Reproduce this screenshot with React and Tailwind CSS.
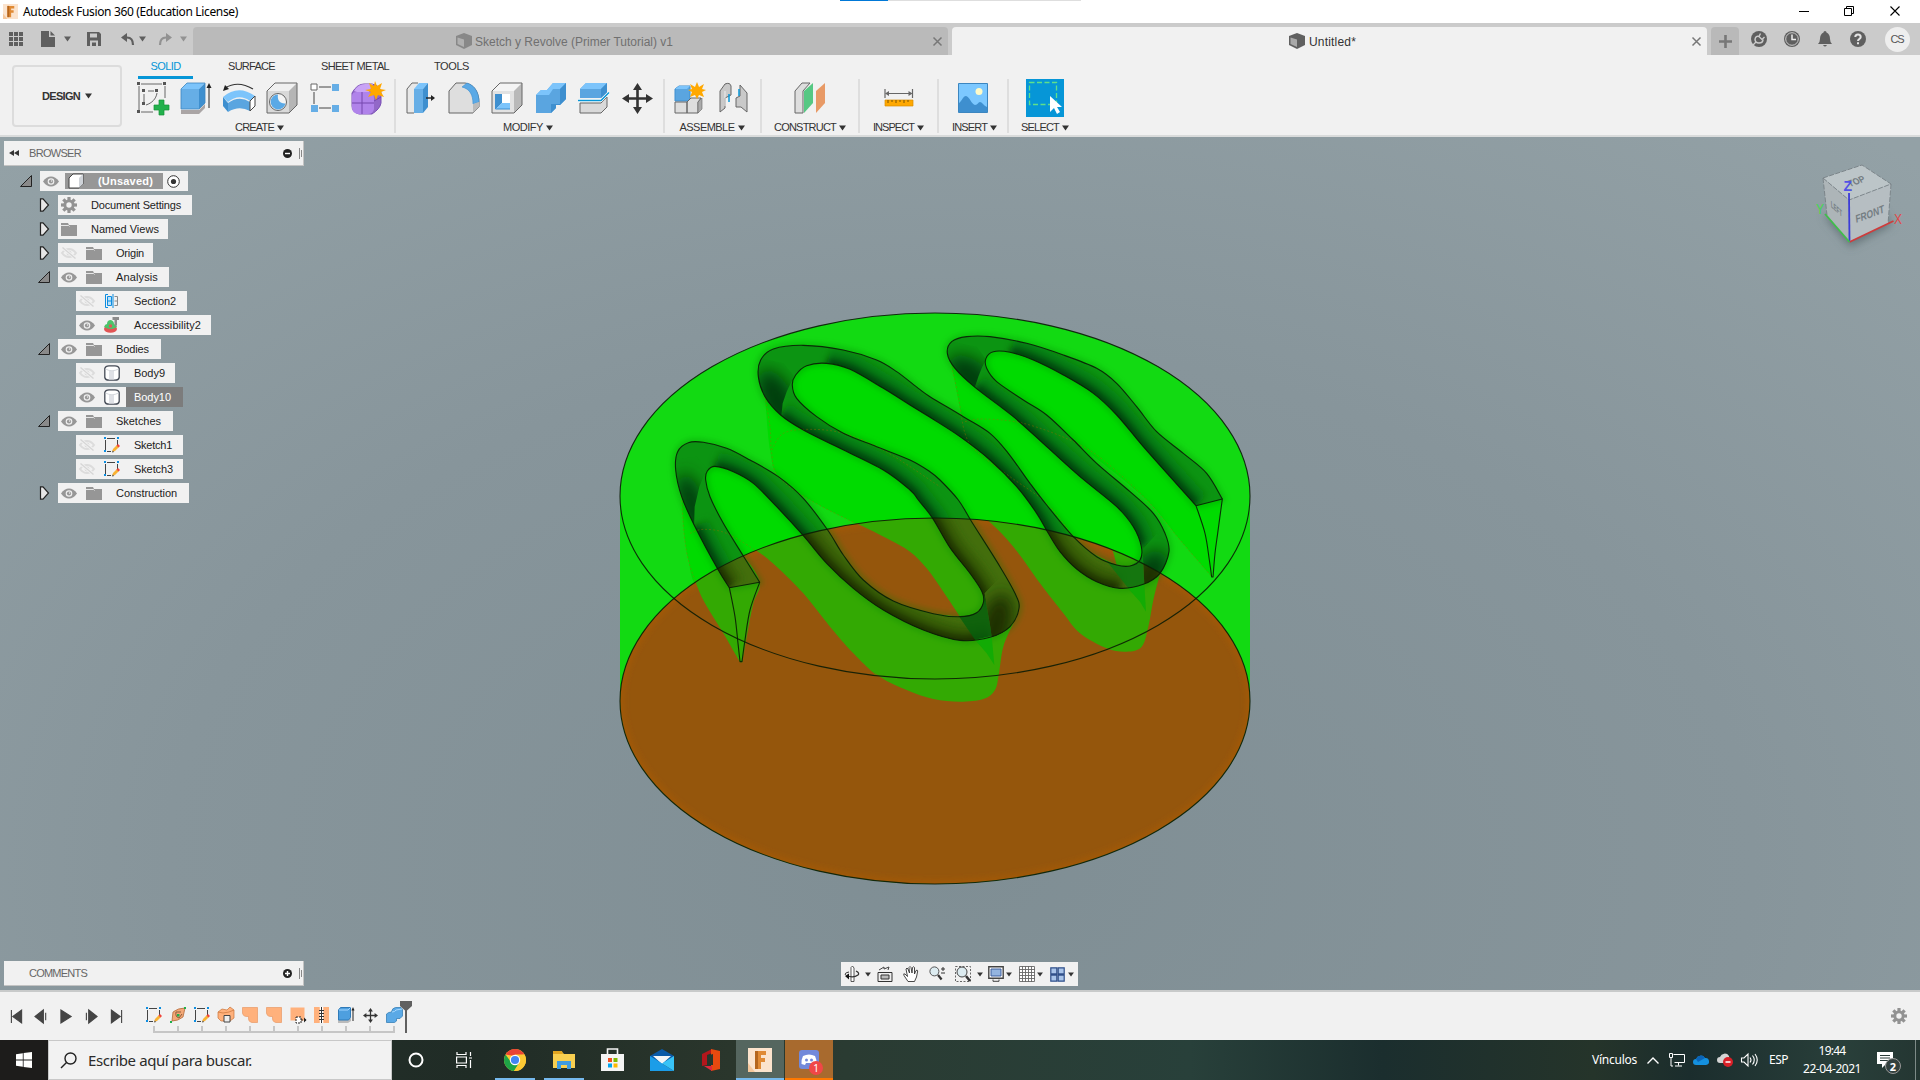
import React, { useLayoutEffect, useRef, useState } from 'react';

const UI = "font-['Liberation_Sans',sans-serif]";
const SEGOE = "font-['Noto_Sans',sans-serif]";

/* Single-line text whose tracking is adjusted to fill a given width. */
function T({ w, className = '', children }) {
  const ref = useRef(null);
  const [ls, setLs] = useState(0);
  useLayoutEffect(() => {
    const natural = ref.current.getBoundingClientRect().width;
    setLs((w - natural) / String(children).length);
  }, []);
  return (
    <span ref={ref} className={`inline-block shrink-0 whitespace-pre ${className}`} style={{ letterSpacing: ls }}>
      {children}
    </span>
  );
}

function Cell({ w, children, className = '' }) {
  return <div className={`flex h-full shrink-0 items-center justify-center ${className}`} style={{ width: w }}>{children}</div>;
}

const Caret = ({ c = '#333', s = 7 }) => (
  <svg width={s} height={s - 1} viewBox="0 0 7 6" className="shrink-0"><path d="M0 .5h7L3.5 5.5z" fill={c} /></svg>
);

const Svg = ({ s = 16, h, vb, children }) => (
  <svg width={s} height={h || s} viewBox={vb || `0 0 ${s} ${h || s}`} className="shrink-0 overflow-visible" fill="none">{children}</svg>
);

/* ---------- ribbon icons ---------- */
const line = '#666';
const R = {
  sketch: (
    <Svg s={32}>
      <path d="M2 4v24M4 2h21M28 4v12M4 30h12" stroke={line} />
      <path d="M7 12v9M11 9h6M9 23C15 21 19 17 20 11" stroke={line} />
      <path d="M0 0h3v3H0zM26 0h3v3h-3zM0 28h3v3H0zM5 7h3v3H5zM18 7h3v3h-3zM5 20h3v3H5z" fill="#555" />
      <path d="M22 18h5v5h5v5h-5v5h-5v-5h-5v-5h5z" fill="#22b14c" stroke="#159238" strokeWidth=".7" />
    </Svg>
  ),
  extrude: (
    <Svg s={32}>
      <path d="M1 28h18l6-6v4l-6 6H1z" fill="#aaa5a5" />
      <path d="M1 7h18v20H1z" fill="#66aee6" /><path d="M1 7l6-6h18l-6 6z" fill="#7cc4fb" /><path d="M19 7l6-6v20l-6 6z" fill="#3e8fcf" />
      <path d="M1 7l6-6h18v20l-6 6H1z" stroke="#3c86c0" strokeWidth=".8" />
      <path d="M29 26V4" stroke="#222" /><path d="M26.500 6L29 1l2.500 5z" fill="#222" />
    </Svg>
  ),
  revolve: (
    <Svg s={34} h={32}>
      <path d="M3 6Q16-2 31 7" stroke="#333" strokeWidth="1.200" /><path d="M1 9l2-6 4 4z" fill="#222" />
      <path d="M1 15Q16 2 33 14l-5 5Q17 11 6 20z" fill="#7cc4fb" />
      <path d="M1 15l5 6v9l-5-6z" fill="#3e8fcf" /><path d="M6 21q11-8 22-1v9q-11-6-22 1z" fill="#5aa5e0" />
      <path d="M28 19l5-5v10l-5 5z" fill="#fff" stroke="#444" />
    </Svg>
  ),
  hole: (
    <Svg s={32}>
      <path d="M1 9h22v22H1z" fill="#d9d9d9" /><path d="M1 9l8-8h22l-8 8z" fill="#f0f0f0" /><path d="M23 9l8-8v22l-8 8z" fill="#b5b5b5" />
      <path d="M1 9l8-8h22v22l-8 8H1z" stroke={line} /><circle cx="12" cy="20" r="8.500" fill="#f4f4f4" stroke={line} />
      <path d="M12 12.500a7.500 7.500 0 1 0 7.500 9C14 22 11 18 12 12.500z" fill="#5aa9e6" />
    </Svg>
  ),
  pattern: (
    <Svg s={30} h={30}>
      <path d="M9 4h12M4 9v12M9 25h12" stroke="#444" />
      <path d="M1 1h6v6H1z" fill="#fff" stroke={line} /><path d="M22 1h7v7h-7zM1 22h7v7H1zM22 22h7v7h-7z" fill="#66aee6" />
    </Svg>
  ),
  form: (
    <Svg s={34} h={33}>
      <path d="M2 11Q7 2 14 2h8q9 2 9 9v10q-1 6-9 11H9q-7-2-7-8z" fill="#9268c8" stroke="#7a4fb5" />
      <path d="M2 14q0-4 5-4h12q5 1 5 6v11q-1 5-6 5H8q-6-1-6-6z" fill="#b083ea" />
      <path d="M4 9q4-7 11-7h8l-4 8H7z" fill="#c9a3f6" />
      <path d="M2 21h22M12 10v22M24 19l7-4" stroke="#7547ad" />
      <path d="M25-1l2 5 5-3-2 6 6 1-5 2 3 5-6-2-2 5-2-5-6 2 3-5-6-2 6-1-2-6 5 3z" fill="#ffa800" />
    </Svg>
  ),
  press: (
    <Svg s={30} h={32}>
      <path d="M8 31H1V7l5-6h6" fill="#e8e8e8" stroke={line} /><path d="M8 7h9v24H8z" fill="#66aee6" />
      <path d="M8 7l5-6h9l-5 6z" fill="#7cc4fb" /><path d="M17 7l5-6v24l-5 6z" fill="#3e8fcf" />
      <path d="M20 16h6" stroke="#222" strokeWidth="1.400" /><path d="M25 13l4 3-4 3z" fill="#222" />
    </Svg>
  ),
  fillet: (
    <Svg s={32}>
      <path d="M1 31V9l7-8h9c9 1 14 9 14 20v4l-6 6z" fill="#dedede" stroke={line} />
      <path d="M14 5l5-4c9 3 12 11 12 19l-6 2C25 13 22 7 14 5z" fill="#5aa9e6" stroke="#3e8fcf" strokeWidth=".6" />
      <path d="M25 22l6-2v5l-6 6z" fill="#bbb" />
    </Svg>
  ),
  shell: (
    <Svg s={32}>
      <path d="M1 9h22v22H1z" fill="#e2e2e2" /><path d="M1 9l8-8h22l-8 8z" fill="#f4f4f4" /><path d="M23 9l8-8v22l-8 8z" fill="#b9b9b9" />
      <path d="M1 9l8-8h22v22l-8 8H1z" stroke={line} /><path d="M5 12h14v15H5z" fill="#fff" />
      <path d="M5 12h6v9l-6 6z" fill="#3e8fcf" /><path d="M5 27l6-6h8v6z" fill="#7cc4fb" /><path d="M4.500 12v15H19" stroke="#3e8fcf" />
    </Svg>
  ),
  combine: (
    <Svg s={32}>
      <path d="M1 13l5-5h6l6-7h13v16l-6 6h-4v3l-5 5H1z" fill="#5aa5e0" />
      <path d="M12 8l6-7h13l-6 6h-7l-4 6H1l5-5z" fill="#7cc4fb" /><path d="M25 7l6-6v16l-6 6h-4v3l-5 5v-9h9z" fill="#3e8fcf" />
    </Svg>
  ),
  split: (
    <Svg s={32}>
      <path d="M2 7l6-6h21v10l-6 5H2z" fill="#5aa5e0" /><path d="M2 7l6-6h21l-6 6z" fill="#7cc4fb" /><path d="M23 7l6-6v10l-6 5z" fill="#3e8fcf" />
      <path d="M2 21h21l6-6v10l-6 6H2z" fill="#d9d9d9" stroke={line} /><path d="M0 18.500h23l8-8" stroke="#fff" strokeWidth="3" /><path d="M0 18.500h23l8-8" stroke="#0696d7" strokeWidth="1.500" />
    </Svg>
  ),
  move: (
    <Svg s={31} vb="0 0 31 31">
      <path d="M15.500 4v23M4 15.500h23" stroke="#333" strokeWidth="2.600" />
      <path d="M15.500 0l4.500 7h-9zM15.500 31l-4.500-7h9zM0 15.500L7 11v9zM31 15.500L24 20v-9z" fill="#333" />
    </Svg>
  ),
  component: (
    <Svg s={32}>
      <path d="M1 7l4-3h11v15H1z" fill="#5aa5e0" stroke="#3e8fcf" /><path d="M1 7l4-3h11l-3 3z" fill="#7cc4fb" />
      <path d="M1 20h12v11H1zM13 20l4-4h10l-3 4v11H13z" fill="#dedede" stroke={line} /><path d="M24 20l4-4v11l-4 4z" fill="#aaa" stroke={line} strokeWidth=".6" />
      <path d="M23 0l2 5 5-3-2 5 4 1-4 2 2 5-5-2-2 4-2-4-5 2 2-5-4-2 4-1-2-5 5 3z" fill="#ffa800" />
    </Svg>
  ),
  joint: (
    <Svg s={30} h={30}>
      <path d="M1 29V8l5-7q5-2 6 2v9l-6 3v10z" fill="#c9c9c9" stroke={line} /><path d="M10 11v8" stroke="#0696d7" strokeWidth="1.500" />
      <path d="M28 29V10l-7-8v11l-4 2v9h5z" fill="#c9c9c9" stroke={line} /><path d="M20 6v7" stroke="#0696d7" strokeWidth="1.500" /><path d="M6 8v15" stroke="#eee" />
    </Svg>
  ),
  plane: (
    <Svg s={32}>
      <path d="M1 31V9l7-8h8l-7 8v22z" fill="#dedede" stroke={line} /><path d="M10 9l9-8v20l-9 10z" fill="#56c883" /><path d="M22 9l9-8v20l-9 10z" fill="#e89a66" />
    </Svg>
  ),
  measure: (
    <Svg s={30} h={20}>
      <path d="M1 1v9M28.500 1v9M3 5.500h24" stroke={line} strokeWidth="1.200" /><path d="M1 5.500L5 3v5zM28.500 5.500L24.500 3v5z" fill={line} />
      <path d="M1 12h28v6H1z" fill="#ffa800" stroke="#d98c00" strokeWidth=".7" /><path d="M4 12v3M8 12v2M12 12v3M16 12v2M20 12v3M24 12v2" stroke="#7a5200" />
    </Svg>
  ),
  image: (
    <Svg s={30} h={30}>
      <path d="M.5.5h29v29H.5z" fill="#7cc8ff" stroke="#3c86c0" /><circle cx="21" cy="8.500" r="3.500" fill="#fffbc8" />
      <path d="M1 20c3-2 4-7 7-7s6 9 9 9 3-3 5-3 3 3 7 5v5H1z" fill="#3e8fcf" />
    </Svg>
  ),
  select: (
    <div className="flex h-[38px] w-[38px] items-center justify-center bg-[#0696d7]">
      <Svg s={32} h={34}><path d="M.5 1.500h27v22H.5z" stroke="#5fe08a" strokeWidth="1.300" strokeDasharray="5 2.500" /><path d="M21 15v16l4-4 3 6 3-2-3-5h5z" fill="#fff" /></Svg>
    </div>
  ),
};

/* w: group width, c: icon cell width, pl / lp: left inset of icons and label */
const GROUPS = [
  { n: 'CREATE', tw: 39, w: 264, c: 42.8, pl: 0, lp: 103, icons: ['sketch', 'extrude', 'revolve', 'hole', 'pattern', 'form'] },
  { n: 'MODIFY', tw: 40, w: 269, c: 43.2, pl: 3.5, lp: 107, icons: ['press', 'fillet', 'shell', 'combine', 'split', 'move'] },
  { n: 'ASSEMBLE', tw: 55, w: 97, c: 43.5, pl: 3.5, lp: 14.5, icons: ['component', 'joint'] },
  { n: 'CONSTRUCT', tw: 62, w: 98, c: 43, pl: 26.5, lp: 12, icons: ['plane'] },
  { n: 'INSPECT', tw: 41, w: 79, c: 43, pl: 17.5, lp: 13, icons: ['measure'] },
  { n: 'INSERT', tw: 35, w: 70, c: 43, pl: 12.5, lp: 13, icons: ['image'] },
  { n: 'SELECT', tw: 38, w: 74, c: 43, pl: 14.5, lp: 12, icons: ['select'] },
];

function Ribbon() {
  return (
    <div className={`flex h-[82px] border-b-2 border-[#d9dbdb] bg-[#f1f1f1] text-[#333] ${UI}`}>
      <div className="mt-[10px] ml-[12px] flex h-[62px] w-[110px] shrink-0 items-center justify-center gap-[5px] rounded-[4px] border-2 border-[#dcdcdc] text-[11px] font-bold">
        <T w={38}>DESIGN</T><Caret />
      </div>
      <div className="ml-[10px] flex flex-col">
        <div className="flex h-[24px] text-[11px]">
          <div className="ml-[6px] flex w-[55px] items-center justify-center border-b-[3px] border-[#0696d7] pt-[2px] text-[#0696d7]"><T w={30}>SOLID</T></div>
          <div className="ml-[35px] flex items-center pb-[1px]"><T w={47}>SURFACE</T></div>
          <div className="ml-[46px] flex items-center pb-[1px]"><T w={68}>SHEET METAL</T></div>
          <div className="ml-[45px] flex items-center pb-[1px]"><T w={35}>TOOLS</T></div>
        </div>
        <div className="flex">
          {GROUPS.map((g, i) => (
            <div key={g.n} className={`flex h-[54px] shrink-0 flex-col ${i < 6 ? 'border-r-2 border-[#dedede]' : ''}`} style={{ width: g.w }}>
              <div className="flex h-[38px] shrink-0" style={{ paddingLeft: g.pl }}>
                {g.icons.map((k) => <Cell key={k} w={g.c}>{R[k]}</Cell>)}
              </div>
              <div className="mt-[4px] flex h-[13px] shrink-0 items-center gap-[3px] text-[11px]" style={{ paddingLeft: g.lp }}>
                <T w={g.tw}>{g.n}</T><Caret />
              </div>
            </div>
          ))}
        </div>
      </div>
    </div>
  );
}

/* ---------- title bar and document tabs ---------- */
const FLogo = ({ s }) => (
  <Svg s={s} vb="0 0 24 24"><path d="M0 0h24v24H0z" fill="#fbe3cd" /><path d="M7 3h11v4h-5v3h4v4h-4v7H7z" fill="#e08a35" /><path d="M7 3h3v18H7z" fill="#b5651d" /><path d="M0 15l7 9H0z" fill="#f5c79c" /></Svg>
);
const CubeIcon = ({ a, b }) => (
  <Svg s={16} h={16}><path d="M0 3l8-3 8 3v9l-8 4-8-4z" fill={a} /><path d="M1.500 4.500L8 6.500v7.500l-6.500-3z" fill={b} /></Svg>
);
const X = ({ s = 9, c = '#777', w = 1.5 }) => <Svg s={s}><path d={`M.5.5L${s - .5} ${s - .5}M${s - .5}.5L.5 ${s - .5}`} stroke={c} strokeWidth={w} /></Svg>;

function TitleBar() {
  return (
    <div className="flex h-[23px] justify-between bg-white">
      <div className={`flex w-[840px] items-center pl-[3px] text-[12px] text-black ${SEGOE}`}>
        <FLogo s={15} /><span className="w-[5px]" /><T w={215}>Autodesk Fusion 360 (Education License)</T>
      </div>
      <div className="flex h-[1px] w-[241px]"><div className="w-[48px] bg-[#0078d7]" /><div className="flex-1 bg-[#dedede]" /></div>
      <div className="ml-auto flex h-[21px] items-center pr-[1px]">
        <Cell w={46}><Svg s={10}><path d="M0 5.500h10" stroke="#000" /></Svg></Cell>
        <Cell w={44}><Svg s={10}><path d="M.5 2.500h7v7h-7zM2.500 2.500v-2h7v7h-2" stroke="#000" /></Svg></Cell>
        <Cell w={48}><X s={10} c="#000" w={1.1} /></Cell>
      </div>
    </div>
  );
}

function TabBar() {
  return (
    <div className={`flex h-[32px] bg-[#cbcbcb] text-[12px] ${UI}`}>
      <div className="flex w-[193px] shrink-0 items-center">
        <Cell w={32}><Svg s={14}>{[0, 5, 10].map((y) => [0, 5, 10].map((x) => <rect key={`${x}-${y}`} x={x} y={y} width="4" height="4" fill="#5f5f5f" />))}</Svg></Cell>
        <Cell w={32}><Svg s={14} h={16}><path d="M0 0h8v6h6v10H0z" fill="#5f5f5f" /><path d="M9.500 0L14 4.500H9.500z" fill="#5f5f5f" /></Svg></Cell>
        <Caret c="#5f5f5f" />
        <Cell w={46}><Svg s={14}><path d="M0 0h12l2 2v12H0z" fill="#5f5f5f" /><path d="M3 1.500h7v4H3zM3 8.500h8V14H3z" fill="#cbcbcb" /><path d="M5 10.500h4V14H5z" fill="#5f5f5f" /></Svg></Cell>
        <Cell w={22}><Svg s={14} h={13}><path d="M2 4.500h4q6 0 6 7.500" stroke="#5f5f5f" strokeWidth="2.200" /><path d="M6 0v9L0 4.500z" fill="#5f5f5f" /></Svg></Cell>
        <Caret c="#5f5f5f" />
        <Cell w={38}><Svg s={14} h={13}><path d="M12 4.500H8q-6 0-6 7.500" stroke="#929292" strokeWidth="2.200" /><path d="M8 0v9l6-4.500z" fill="#929292" /></Svg></Cell>
        <div className="-ml-[4px] flex"><Caret c="#929292" /></div>
      </div>
      <div className="mt-[4px] flex w-[755px] shrink-0 items-center rounded-t-[4px] bg-[#bababa] pr-[6px] text-[#707070]">
        <div className="ml-[263px] flex flex-1 items-center gap-[3px]"><CubeIcon a="#888" b="#b0b0b0" /><T w={198} className="pt-[1px]">Sketch y Revolve (Primer Tutorial) v1</T></div>
        <X c="#777" />
      </div>
      <div className="mt-[4px] ml-[4px] flex w-[755px] shrink-0 items-center rounded-t-[4px] bg-[#f1f1f1] pr-[6px] text-[#333]">
        <div className="ml-[337px] flex flex-1 items-center gap-[4px]"><CubeIcon a="#606060" b="#a9a9a9" /><T w={47} className="pt-[1px]">Untitled*</T></div>
        <X />
      </div>
      <div className="mt-[4px] ml-[4px] flex w-[28px] shrink-0 items-center justify-center rounded-t-[4px] bg-[#b9b9b9]"><Svg s={13}><path d="M6.500 0v13M0 6.500h13" stroke="#777" strokeWidth="2.600" /></Svg></div>
      <div className="ml-[3px] flex">
        <Cell w={33}><Svg s={16}><circle cx="8" cy="8" r="8" fill="#5f5f5f" /><path d="M4 8q0 4 4 4t4-3.500" stroke="#cbcbcb" strokeWidth="1.500" /><path d="M2 14l3-3M4 8q1-3.500 4-2.500L11.500 9M9.500 2.500L8 5.500M13.500 6L11 8.500" stroke="#cbcbcb" strokeWidth="1.400" /></Svg></Cell>
        <Cell w={33}><Svg s={16}><circle cx="8" cy="8" r="8" fill="#5f5f5f" /><circle cx="8" cy="8" r="6.300" stroke="#cbcbcb" /><path d="M8 3.500V8.500h4" stroke="#eee" strokeWidth="1.500" /></Svg></Cell>
        <Cell w={33}><Svg s={14} h={16}><path d="M7 0q1.500 0 1.500 1.500Q12 3 12 8q0 3 2 5H0q2-2 2-5Q2 3 5.500 1.500 5.500 0 7 0zM5 14h4q-2 3-4 0z" fill="#5f5f5f" /></Svg></Cell>
        <Cell w={33}><Svg s={16}><circle cx="8" cy="8" r="8" fill="#5f5f5f" /><path d="M5.300 6q0-2.600 2.700-2.600T10.700 6C10.700 8 8 8 8 10" stroke="#e4e4e4" strokeWidth="2" /><path d="M7 11.300h2v2H7z" fill="#e4e4e4" /></Svg></Cell>
        <Cell w={46}><div className="flex h-[25px] w-[25px] items-center justify-center rounded-full bg-[#eee] text-[11px] text-[#555]"><T w={13}>CS</T></div></Cell>
      </div>
    </div>
  );
}

/* ---------- browser tree ---------- */
const Eye = () => (
  <Svg s={16} h={11}><path d="M0 5.500Q3.500.5 8 .5t8 5Q12.500 10.500 8 10.500T0 5.500z" fill="#979797" /><circle cx="8" cy="5.500" r="3.300" fill="#f0f0f0" /><circle cx="8" cy="5.500" r="2.100" fill="#979797" /><circle cx="8.600" cy="5" r=".8" fill="#eee" /></Svg>
);
const EyeOff = () => (
  <Svg s={16} h={12}><path d="M1 6q3-4 7-4t7 4q-3 4-7 4T1 6z" stroke="#dcdcdc" strokeWidth="2" /><circle cx="8" cy="6" r="2.500" fill="#dcdcdc" /><path d="M1 .5L15 11.500" stroke="#f1f1f1" strokeWidth="3" /><path d="M1.500.5l13 11" stroke="#d6d6d6" strokeWidth="1.300" /></Svg>
);
const Gear = ({ s = 16, c = '#929292' }) => (
  <Svg s={s} vb="-8 -8 16 16"><g fill={c}>{[0, 45, 90, 135].map((a) => <rect key={a} x="-1.600" y="-8" width="3.200" height="16" transform={`rotate(${a})`} />)}<circle r="5.600" /></g><circle r="2.700" fill="#f1f1f1" /></Svg>
);
const Sketch = () => (
  <Svg s={16}><path d="M3 1.500h8M1.500 3v10M3 14.500h4M13.500 3v5" stroke="#444" /><path d="M0 0h2v2H0zM13 0h2v2h-2zM0 13h2v2H0z" fill="#0d8de0" /><path d="M8 15l1-3 4-4 2 2-4 4z" fill="#f9b233" /><path d="M12.500 8.500L14 7l2 2-1.500 1.500z" fill="#f0433d" /><path d="M8 15.500l.7-2 1.500 1.500z" fill="#555" /></Svg>
);
const Mini = {
  gear: <Gear />,
  folder: <Svg s={16} h={13}><path d="M0 0h7l1 2h8v11H0z" fill="#969696" /><path d="M0 2.500h7.500l1 1" stroke="#f1f1f1" strokeWidth=".9" /></Svg>,
  section: <Svg s={16}><path d="M4 1.500H1.500v13H4" stroke="#0d8de0" /><path d="M3.500 3.500h4v9h-4z" fill="#b9e0fa" stroke="#0d8de0" /><path d="M3.500 8h4M9 1v14" stroke="#0d8de0" /><path d="M10.500 3.500h3v9h-3M10.500 8h3" stroke="#8a8a8a" /></Svg>,
  access: <Svg s={16}><ellipse cx="6.500" cy="12" rx="6.500" ry="3.800" fill="#e25555" /><path d="M0 10q1-3 3-3 0-4 4-4 3 1 3 4 3 1 3 3-6 4-13 0z" fill="#4cc46a" /><circle cx="6.500" cy="9" r="1.700" fill="#e25555" /><path d="M8.500 0H15v3h-2v5l-1.500 1.500L10.500 8V3h-2z" fill="#8c8c8c" /></Svg>,
  body: <Svg s={16}><path d="M.8 3.500Q1.500.8 5 .8h6q3.500 0 4.200 2.700v9Q14.500 15.200 11 15.200H5Q1.500 15.200.8 12.500z" fill="#fff" stroke="#444a55" strokeWidth="1.300" /><path d="M5 6h5v8.500H5z" fill="#dfe1e6" /><path d="M1.500 4Q8 7.500 14.500 4" stroke="#d5d8dd" /></Svg>,
  sketch: <Sketch />,
};

const TREE = [
  { t: 'Document Settings', tw: 90, l: 1, w: 134, i: 'gear', open: false },
  { t: 'Named Views', tw: 68, l: 1, w: 110, i: 'folder', open: false },
  { t: 'Origin', tw: 28, l: 1, w: 95, i: 'folder', eye: 0, open: false },
  { t: 'Analysis', tw: 42, l: 1, w: 111, i: 'folder', eye: 1, open: true },
  { t: 'Section2', tw: 42, l: 2, w: 111, i: 'section', eye: 0 },
  { t: 'Accessibility2', tw: 67, l: 2, w: 135, i: 'access', eye: 1 },
  { t: 'Bodies', tw: 33, l: 1, w: 103, i: 'folder', eye: 1, open: true },
  { t: 'Body9', tw: 31, l: 2, w: 99, i: 'body', eye: 0 },
  { t: 'Body10', tw: 37, l: 2, w: 107, i: 'body', eye: 1, sel: true },
  { t: 'Sketches', tw: 45, l: 1, w: 115, i: 'folder', eye: 1, open: true },
  { t: 'Sketch1', tw: 38, l: 2, w: 107, i: 'sketch', eye: 0 },
  { t: 'Sketch3', tw: 39, l: 2, w: 107, i: 'sketch', eye: 0 },
  { t: 'Construction', tw: 61, l: 1, w: 131, i: 'folder', eye: 1, open: false },
];

const Arrow = ({ open }) => open
  ? <Svg s={12}><path d="M11.500.5v11H.5z" fill="#8a8a8a" stroke="#222" /></Svg>
  : <Svg s={12} h={14}><path d="M2.500.8L5 .8 10.500 7 5 13.200H2.500z" fill="#e6e6e6" stroke="#222" strokeWidth="1.200" /></Svg>;

function Tree() {
  return (
    <div className={`mt-[5px] flex flex-col gap-[4px] text-[11px] text-[#222] ${UI}`}>
      <div className="flex h-[20px] items-center">
        <div className="flex w-[40px] shrink-0 pl-[20px]"><Arrow open /></div>
        <div className="flex h-[20px] w-[148px] items-center bg-[#f1f1f1] pl-[3px]">
          <Eye />
          <div className="ml-[6px] flex h-[16px] w-[98px] items-center bg-[#979797] pl-[3px] font-bold text-white">
            <Svg s={16}><path d="M1 5l4-4h10v10l-4 4H1z" fill="#fff" stroke="#444" /><path d="M11 5l4-4v10l-4 4z" fill="#cfd3d8" /></Svg>
            <span className="w-[14px]" /><T w={55}>(Unsaved)</T>
          </div>
          <span className="w-[4px]" />
          <Svg s={13}><circle cx="6.500" cy="6.500" r="5.800" stroke="#333" fill="#fff" /><circle cx="6.500" cy="6.500" r="2.600" fill="#333" /></Svg>
        </div>
      </div>
      {TREE.map((r) => (
        <div key={r.t} className="flex h-[20px]">
          <div className={`flex shrink-0 items-center ${r.l === 1 ? 'w-[58px] pl-[38px]' : 'w-[76px]'}`}>{r.l === 1 && <Arrow open={r.open} />}</div>
          <div className="flex items-center bg-[#f1f1f1]" style={{ width: r.w }}>
            {r.eye !== undefined && <Cell w={22}>{r.eye ? <Eye /> : <EyeOff />}</Cell>}
            <Cell w={r.eye !== undefined ? 28 : 22}>{Mini[r.i]}</Cell>
            <div className={`flex h-full flex-1 items-center ${r.eye !== undefined ? 'pl-[8px]' : 'pl-[11px]'} ${r.sel ? 'bg-[#7c7c7c] text-white' : ''}`}><T w={r.tw}>{r.t}</T></div>
          </div>
        </div>
      ))}
    </div>
  );
}

function PanelHeader({ title, tw, open }) {
  return (
    <div className={`ml-[4px] flex h-[25px] w-[300px] items-center border-r border-b border-[#c3c3c3] bg-[#f1f1f1] text-[11px] text-[#666] ${UI}`}>
      <Cell w={25} className="pr-[5px]">{open && <Svg s={10} h={6}><path d="M5 0v6L0 3zM10 0v6L5 3z" fill="#333" /></Svg>}</Cell>
      <T w={tw}>{title}</T>
      <div className="ml-auto flex items-center gap-[7px]">
        <Svg s={9}><circle cx="4.500" cy="4.500" r="4.500" fill="#222" /><path d={open ? 'M2 4.500h5' : 'M2 4.500h5M4.500 2v5'} stroke="#fff" strokeWidth="1.400" /></Svg>
        <Svg s={4} h={11}><path d="M.5 0v11M2.500 2v7" stroke="#888" /></Svg>
      </div>
    </div>
  );
}

/* ---------- model ---------- */
const P = (ox, oy, a) => a.trim().split(/\s+/).map((s) => { const [x, y] = s.split(',').map(Number); return [ox + x / 3, oy + y / 3]; });
const A = (s) => P(610, 300, s);
const B = (s) => P(930, 300, s);
const C = (s) => P(800, 500, s);

/* Catmull-Rom spline through the given points. */
function spline(p, move = true) {
  let d = move ? `M${p[0][0]} ${p[0][1]}` : `L${p[0][0]} ${p[0][1]}`;
  for (let i = 0; i < p.length - 1; i++) {
    const a = p[i - 1] || p[i], b = p[i], c = p[i + 1], e = p[i + 2] || c;
    d += `C${(b[0] + (c[0] - a[0]) / 6).toFixed(2)} ${(b[1] + (c[1] - a[1]) / 6).toFixed(2)} ${(c[0] - (e[0] - b[0]) / 6).toFixed(2)} ${(c[1] - (e[1] - b[1]) / 6).toFixed(2)} ${c[0].toFixed(2)} ${c[1].toFixed(2)}`;
  }
  return d;
}

const L1a = A('358,863 323,807 255,680 215,590 197,510 203,455 235,428 280,427 350,445 420,480 505,530 580,595 653,690');
const L1b = C('130,165 190,240 280,303 400,341 480,350 530,338 550,308 546,275 510,220 450,143 398,55 355,0');
const L1c = A('900,570 820,510 690,445 580,390 512,345 465,290 445,230 452,180 490,147 580,136 700,150 800,180 860,215 925,265');
const L1d = B('0,290 100,350 180,400 235,460 300,550 350,615 430,710 500,770 560,795 600,798 630,780 634,740 610,680 560,620 450,530 350,440 250,350 135,262 75,205 52,160 65,125 110,110 180,110 290,130 400,165 500,205 560,250 620,320 680,395 760,460 830,520 877,597');
const L2a = A('449,847 400,768 340,670 300,590 287,540 292,513 315,499 370,515 430,550 500,620 580,707');
const L2b = C('80,190 160,265 250,330 370,390 480,421 570,412 630,380 657,325 645,280 600,200 515,65 475,0');
const L2c = A('990,540 960,515 900,480 800,440 700,400 620,350 560,295 547,255 557,225 590,197 650,190 720,208 820,265 900,315');
const L2d = B('0,352 90,410 180,480 260,560 320,640 355,700 390,755 440,807 500,845 570,865 640,853 690,820 717,755 705,700 670,640 600,575 500,490 430,420 350,345 280,300 200,245 170,205 168,175 190,155 240,157 310,180 400,225 490,280 560,345 640,440 720,530 798,617');
const L1 = [...L1a, ...L1b, ...L1c, ...L1d];
const L2 = [...L2a, ...L2b, ...L2c, ...L2d];
const BAND = spline(L1) + spline([...L2].reverse(), false) + 'Z';

/* shaded (lower-left) edges of the groove */
const DARK = [
  spline([...L2a.slice(6), ...L2b.slice(0, 6)]),
  spline([...L1b.slice(6), ...L1c.slice(0, 5)]),
  spline([...L2c.slice(10), ...L2d.slice(0, 10)]),
  spline(L1d.slice(11, 18)),
  spline(L2d.slice(24)),
  spline(L1a.slice(0, 3)),
];

/* places where the groove turns back: visible side of the crease, and its darkest corner */
const poly = (p) => `M${p.map((q) => q.join(' ')).join('L')}Z`;
const FOLDS = [
  { side: poly(A('290,505 268,560 254,620 252,680 190,620 180,480 260,470')), at: A('250,625')[0], rx: 13, ry: 36, rot: -18 },
  { side: poly(A('552,228 530,275 518,310 514,350 430,300 430,170 520,190')), at: A('508,315')[0], rx: 17, ry: 38, rot: -25 },
  { side: poly(B('168,178 155,205 145,230 134,264 40,200 40,120 140,140')), at: B('125,240')[0], rx: 18, ry: 30, rot: -45 },
  { side: poly(C('553,280 562,330 570,375 575,412 670,400 680,280 600,230')), at: C('585,385')[0], rx: 16, ry: 36, rot: 15 },
  { side: poly(B('636,750 640,790 643,856 720,840 730,740 680,700')), at: B('655,835')[0], rx: 16, ry: 30, rot: 25 },
];

const SWEEP = [
  spline(A('215,590 222,700 235,780 258,850 285,910 340,1000 390,1087')) + spline(A('397,1087 412,1000 430,910 449,847 400,768 323,700'), false) + 'Z',
  spline([...A('270,690 340,700 440,753 500,800 580,880 660,980 740,1070 800,1125'), ...C('100,390 160,460 240,530 320,570 400,597 480,605 550,597 585,570 597,520 610,440 640,370')])
    + spline(C('657,325 600,200 515,65 475,0 355,0'), false) + spline(C('100,40 180,75 260,115 330,155 380,205 430,275 480,350'), false)
    + spline(C('400,341 280,303 190,240 130,165 78,88'), false) + spline(A('580,595 500,530 300,499'), false) + 'Z',
  spline(B('100,610 175,662 250,740 330,850 400,940 450,1000 530,1045 590,1055 635,1040 655,980 670,900 690,822'))
    + spline(B('717,755 634,640 480,500'), false) + spline(B('560,795 480,755 430,710'), false) + spline(B('300,550 100,410'), false) + 'Z',
];
const BRIGHT = [
  spline(A('215,590 222,700 235,780 258,850 323,807')) + spline(A('440,753 580,707'), false) + spline(A('650,690 500,530 300,440'), false) + 'Z',
  spline([...A('465,290 480,450 505,530 600,600 740,672 800,700')]) + spline(B('0,720 350,720 634,830 690,822'), false)
    + spline(B('717,755 670,640 500,490'), false) + spline(B('480,460 650,600 750,720 845,830'), false) + spline(B('877,597 700,480 490,260 190,135 70,150'), false)
    + spline(B('65,200 95,350 105,400'), false) + spline(A('990,340 700,170 500,170'), false) + 'Z',
];

function Groove({ light, mid, dark, clip }) {
  return (
    <g clipPath={clip}>
      <g clipPath="url(#band)">
        <path d={BAND} fill={light} />
        <g filter="url(#soft)">
          {DARK.map((d, i) => <path key={i} d={d} stroke={mid} strokeWidth="30" fill="none" strokeOpacity=".55" />)}
          {DARK.map((d, i) => <path key={`n${i}`} d={d} stroke={dark} strokeWidth="11" fill="none" />)}
        </g>
        {FOLDS.map((f, i) => (
          <g key={i} clipPath={`url(#fold${i})`}>
            <path d={f.side} fill={light} />
            <ellipse cx={f.at[0]} cy={f.at[1]} rx={f.rx} ry={f.ry} transform={`rotate(${f.rot} ${f.at[0]} ${f.at[1]})`} fill={dark} filter="url(#wide)" />
          </g>
        ))}
      </g>
    </g>
  );
}

function Model() {
  return (
    <svg className="h-[600px] w-[660px]" viewBox="605 300 660 600" fill="none">
      <defs>
        <clipPath id="floor"><ellipse cx="935" cy="701" rx="315" ry="183" /></clipPath>
        <clipPath id="band"><path d={BAND} /></clipPath>
        {FOLDS.map((f, i) => <clipPath key={i} id={`fold${i}`}><path d={f.side} /></clipPath>)}
        <filter id="soft" filterUnits="userSpaceOnUse" x="605" y="300" width="660" height="600"><feGaussianBlur stdDeviation="3.500" /></filter>
        <filter id="wide" filterUnits="userSpaceOnUse" x="605" y="300" width="660" height="600"><feGaussianBlur stdDeviation="8" /></filter>
        <filter id="edge" filterUnits="userSpaceOnUse" x="605" y="300" width="660" height="600"><feGaussianBlur stdDeviation="3" /></filter>
      </defs>
      <path d="M620 496A315 183 0 0 1 1250 496V701A315 183 0 0 1 620 701z" fill="#12da12" />
      {BRIGHT.map((d, i) => <path key={i} d={d} fill="#00db00" />)}
      <g clipPath="url(#floor)">
        <ellipse cx="935" cy="701" rx="315" ry="183" fill="#95560c" />
        <ellipse cx="935" cy="701" rx="315" ry="183" stroke="#b35c08" strokeOpacity=".55" strokeWidth="6" filter="url(#edge)" />
        {SWEEP.map((d, i) => <path key={i} d={d} fill="#33a903" />)}
      </g>
      <path d={BAND} stroke="#0a7a0a" strokeOpacity=".5" strokeWidth="4" filter="url(#edge)" />
      <Groove light="#0c9412" mid="#066a0c" dark="#033d08" />
      <Groove light="#436e0c" mid="#2c4d07" dark="#1a2d04" clip="url(#floor)" />
      <path d={poly(C('478,350 510,345 535,335 550,310 553,285 562,330 570,375 575,408 550,416 525,419'))} fill="#04600c" fillOpacity=".8" />
      <path d={poly(C('525,419 575,408 583,495 560,460'))} fill="#12ab04" />
      <path d={poly(B('530,783 565,797 600,798 630,780 636,765 640,800 643,852 595,865'))} fill="#067a10" fillOpacity=".75" />
      <path d={poly(B('595,866 643,852 648,935 630,905'))} fill="#12ab04" />
      <g stroke="#a06a00" strokeOpacity=".5" strokeWidth=".8" strokeDasharray="2 2">
        <path d={spline(A('215,590 222,700 235,780 258,850'))} /><path d={spline(A('240,700 280,688 350,700 440,753'))} />
        <path d={spline(A('465,290 480,380 485,460 505,530 600,600 740,672'))} /><path d={spline(A('485,450 520,400 600,388 700,400 820,450 990,560'))} />
        <path d={spline(B('65,200 85,290 105,400 140,455 240,530 350,610 430,710'))} /><path d={spline(B('105,365 160,357 280,370 420,420 520,480 650,600 750,720 845,830'))} />
      </g>
      <g stroke="#0a1c06" strokeWidth="1.100" strokeOpacity=".9" strokeLinejoin="round">
        <path d={spline(L1)} /><path d={spline(L2)} />
        <ellipse cx="935" cy="496" rx="315" ry="183" /><ellipse cx="935" cy="701" rx="315" ry="183" />
        <path d={spline(A('358,863 375,950 384,1030 390,1085')) + spline(A('396,1085 405,1020 420,930 449,847'), false) + 'Z'} />
        <path d={spline(B('798,617 825,700 838,780 845,831')) + spline(B('849,831 855,760 863,700 877,597'), false) + 'Z'} />
      </g>
    </svg>
  );
}

function ViewCube() {
  return (
    <svg className="h-[110px] w-[120px]" viewBox="0 0 120 110" fill="none">
      <defs><filter id="shade" x="-50%" y="-50%" width="200%" height="200%"><feGaussianBlur stdDeviation="4" /></filter></defs>
      <path d="M24 66l26 31 42-22-10-15z" fill="#55646a" fillOpacity=".7" filter="url(#shade)" />
      <path d="M23 28l39-13 29 19-42 16z" fill="#bcc5c8" /><path d="M23 28l26 22v42l-22-27z" fill="#adb5b8" /><path d="M49 50l42-16-3 40-39 18z" fill="#b6bec2" />
      <path d="M23 28l39-13 29 19-42 16zM23 28l4 37M91 34l-3 40" stroke="#727b80" strokeWidth=".8" strokeDasharray="5 1.500" />
      <g className={UI} fontWeight="bold" fill="#747d82">
        <text transform="matrix(.95 -.35 .1 1 56 73)" fontSize="11" textLength="30" lengthAdjust="spacingAndGlyphs">FRONT</text>
        <text transform="matrix(.7 .65 .05 1 31 57)" fontSize="9.500" textLength="16" lengthAdjust="spacingAndGlyphs">LEFT</text>
        <text transform="matrix(.95 -.35 .45 .75 50 37)" fontSize="11" textLength="17" lengthAdjust="spacingAndGlyphs">TOP</text>
      </g>
      <path d="M49.500 92l-.5-49" stroke="#3c3cd8" strokeWidth="1.800" /><path d="M49.500 92l44-21" stroke="#cf3b3b" strokeWidth="1.800" /><path d="M49.500 92L25 64" stroke="#3fbf4a" strokeWidth="1.800" />
      <g className={UI} fontSize="14"><text x="43.500" y="40.500" fill="#5252e6" fontWeight="bold">Z</text><text x="94" y="73.500" fill="#e04a4a" textLength="8" lengthAdjust="spacingAndGlyphs">X</text><text x="16" y="64" fill="#3fdc4c" textLength="8" lengthAdjust="spacingAndGlyphs">Y</text></g>
    </svg>
  );
}

const lens = <><circle cx="6" cy="6" r="5" fill="#dcebf0" stroke="#444" /><path d="M10 10l4 5" stroke="#333" strokeWidth="2.500" /></>;
function NavBar() {
  return (
    <div className="flex h-[24px] w-[237px] items-center bg-[#f1f1f1]">
      <Cell w={22}><Svg s={16}><path d="M7 1.500L8.500 0 10 2v13.500H7z" fill="#fff" stroke="#333" strokeWidth=".8" /><path d="M12 5q4 2 2 4-4 3-11 1" stroke="#333" strokeWidth="1.300" /><path d="M5 6Q0 7 1.500 9" stroke="#333" /><path d="M5 7.500v6L1 10z" fill="#111" /></Svg></Cell>
      <Cell w={10}><Caret s={6} /></Cell>
      <Cell w={24}><Svg s={16}><path d="M1 6.500h14v9H1z" fill="#eee" stroke="#333" /><path d="M4 9h8v4H4z" fill="#bbb" stroke="#333" /><path d="M2 4l5-3v2l5-2-1 3" stroke="#444" /></Svg></Cell>
      <Cell w={28}><Svg s={16}><path d="M5 15.500L1 9.500Q0 7 2 8l2.500 2.500L3 3q1-2 2 0l1.500 4L6 1.500q1-2 2 0L9 7l.5-5.500q1.200-1.500 2 0L11.500 8 13 4.500q1.500-1 1.700.5L13.500 11l-2 4.500z" fill="#fff" stroke="#333" strokeWidth=".9" /></Svg></Cell>
      <Cell w={24}><Svg s={16}><g transform="scale(.9)">{lens}</g><path d="M12 3h4M14 1v4M12 7h4" stroke="#333" /></Svg></Cell>
      <Cell w={27}><Svg s={16}><path d="M.5.5h15v15H.5z" stroke="#666" strokeDasharray="2 1.500" /><g transform="translate(1 0)">{lens}</g></Svg></Cell>
      <Cell w={7}><Caret s={6} /></Cell>
      <span className="w-[5px]" />
      <Svg s={16}><path d="M.8.8h14.400v11.500H.8z" fill="#fff" stroke="#444" strokeWidth="1.400" /><path d="M3 3h10v7H3z" fill="#94b4df" stroke="#3d5f9e" /><path d="M5 13.500v1.800h6v-1.800" stroke="#444" /></Svg>
      <Cell w={10}><Caret s={6} /></Cell>
      <span className="w-[5px]" />
      <Svg s={16}><path d="M.5.5h15v15H.5z" fill="#fff" /><path d="M.5.5h15v15H.5zM3.500 0v16M6.500 0v16M9.500 0v16M12.500 0v16M0 3.500h16M0 6.500h16M0 9.500h16M0 12.500h16" stroke="#666" strokeWidth=".9" /></Svg>
      <Cell w={10}><Caret s={6} /></Cell>
      <span className="w-[5px]" />
      <Svg s={15}><path d="M.8.8h6v6h-6zM8.200.8h6v6h-6zM.8 8.200h6v6h-6zM8.200 8.200h6v6h-6z" fill="#a9c4ea" stroke="#2f4f8a" strokeWidth="1.200" /></Svg>
      <Cell w={12}><Caret s={6} /></Cell>
    </div>
  );
}

/* ---------- timeline ---------- */
const O = '#ffb17c';
const TL = [
  <Sketch />,
  <Svg s={16}><path d="M2 14L3 5q5-4 12-4l-2 9q-5 4-11 4z" fill="#f3a877" stroke="#b36a3a" strokeWidth=".8" /><path d="M11 5H6q-1 5 3 6l3-4" stroke="#8a5a3a" /><path d="M0 14h2v2H0zM14 0h2v2h-2zM7 7h2.500v2.500H7z" fill="#1fb04a" /></Svg>,
  <Sketch />,
  <Svg s={16}><path d="M0 5l4-3 5 1 3-3 4 3v8l-4 3H3L0 11z" fill={O} stroke="#c9743a" strokeWidth=".7" /><path d="M0 5l5 1 6-1 5-2" stroke="#c9743a" strokeWidth=".7" /><path d="M6 8.500h6v6.500H6z" fill="#eee" stroke="#444" /></Svg>,
  <Svg s={16}><path d="M.5.5h15v15H10Q6 15 6.500 9.500 1 10 .5 6z" fill={O} stroke="#e89a66" strokeWidth=".7" /></Svg>,
  <Svg s={16}><path d="M.5.5h15v15H10Q6 15 6.500 9.500 1 10 .5 6z" fill={O} stroke="#e89a66" strokeWidth=".7" /></Svg>,
  <Svg s={16}><path d="M.5.5h14v13H.5z" fill={O} /><path d="M6 10h5v6H6zM11 13h5" fill="#fff" stroke="#222" strokeDasharray="2 1" /><path d="M14 10.500l2.500 2.500-2.500 2.500z" fill="#222" /></Svg>,
  <Svg s={16}><path d="M0 0h15v16H0z" fill={O} /><path d="M7.500 0v16" stroke="#fff" strokeWidth="3.500" /><path d="M7.500 0v16M5 3.500h5M5 6.500h5M5 9.500h5M5 12.500h5" stroke="#333" /></Svg>,
  <Svg s={16}><path d="M0 13h10l3-2v3l-3 2H0z" fill="#bbb" /><path d="M.5 3l2-2.500h10v10l-2 2.500H.5z" fill="#4e9fdf" stroke="#2f7ab8" /><path d="M1 3h9l2.500-2.500" stroke="#9fd4ff" /><path d="M15 3v11" stroke="#222" /><path d="M13.500 3.500L15 0l1.500 3.500z" fill="#222" /></Svg>,
  <Svg s={15} vb="0 0 31 31"><path d="M15.500 4v23M4 15.500h23" stroke="#333" strokeWidth="2.600" /><path d="M15.500 0l5 7h-10zM15.500 31l-5-7h10zM0 15.500l7-5v10zM31 15.500l-7 5v-10z" fill="#333" /></Svg>,
  <Svg s={17} h={16}><path d="M.5 7q2-2 5-2Q6 1 9.500.5H15l1.500 2V9L14 11.500h-3.500V14l-2 1.500H.5z" fill="#5aa9e6" stroke="#3780b8" strokeWidth=".8" /><path d="M6 5q3 0 4-2l6-1" stroke="#a5d8ff" /></Svg>,
];

function Timeline() {
  return (
    <div className="flex h-[50px] border-t-2 border-[#c8caca] bg-[#f1f1f1]">
      <div className="flex h-[48px] w-[142px] shrink-0 items-center pl-[4px]">
        {['M1.500 0v14M12.500 0v14L3 7z', 'M9 0v14L0 7zM11.500 3v8', 'M1 0v14l11-7z', 'M4 0v14l9-7zM1.500 3v8', 'M12.500 0v14M1.500 0v14L11 7z'].map((d) => (
          <Cell key={d} w={25}><Svg s={13} vb="0 0 14 14"><path d={d} fill="#444" stroke="#444" strokeWidth="1.200" /></Svg></Cell>
        ))}
      </div>
      <div className="flex shrink-0 flex-col pt-[14px]">
        <div className="flex h-[18px]">{TL.map((n, i) => <Cell key={i} w={24}>{n}</Cell>)}</div>
        <div className="mt-[2px] ml-[11px] flex h-[7px] w-[242px] justify-between border-b-2 border-[#c6c6c6]">{TL.map((_, i) => <div key={i} className="w-[2px] bg-[#c6c6c6]" />)}</div>
      </div>
      <div className="mt-[9px] -ml-[6px]"><Svg s={12} h={33}><path d="M0 0h12v5L7 9.500V32H5V9.500L0 5z" fill="#606060" /></Svg></div>
      <div className="ml-auto flex h-[48px] items-center pr-[13px]"><Gear /></div>
    </div>
  );
}

/* ---------- taskbar ---------- */
const Slot = ({ bg = '', bar = '', full, children }) => (
  <div className={`flex h-full w-[48px] shrink-0 flex-col items-center justify-between pt-[8px] ${bg}`}>
    <div className="flex h-[24px] items-center">{children}</div>
    <div className={`h-[2px] ${full ? 'w-full' : 'w-[40px]'} ${bar}`} />
  </div>
);

function Taskbar() {
  return (
    <div className={`flex h-[40px] bg-[linear-gradient(90deg,#26302c_0%,#202c26_25%,#2a362c_38%,#2a3b32_44%,#28403a_62%,#1b2e2e_72%,#25342a_83%,#1b2d2d_88%,#293f3a_96%,#243632_100%)] text-white ${SEGOE}`}>
      <div className="flex w-[48px] shrink-0 items-center justify-center bg-[#1d1c1b]"><Svg s={16}><path d="M0 2.200L6.800 1.200v6.300H0zM7.600 1.100L16 0v7.500H7.600zM0 8.400h6.800v6.400L0 13.800zM7.600 8.400H16V16l-8.400-1.100z" fill="#fff" /></Svg></div>
      <div className="flex w-[344px] shrink-0 items-center border border-[#c8c8c8] bg-[#f2f2f2] pl-[11px] text-[15px] text-[#2b2b2b]">
        <Svg s={17}><circle cx="10.500" cy="6.500" r="5.500" stroke="#222" strokeWidth="1.400" /><path d="M6.500 10.500L1 16" stroke="#222" strokeWidth="1.400" /></Svg><span className="w-[11px]" /><T w={164}>Escribe aquí para buscar.</T>
      </div>
      <Slot><Svg s={16}><circle cx="8" cy="8" r="6.500" stroke="#fff" strokeWidth="2" /></Svg></Slot>
      <Slot><Svg s={17} h={16}><path d="M1 0v2.500h9V0M1 16v-2.500h9V16M.6 5h9.800v6H.6zM14.500 0v4M14.500 8v8M13 6h3" stroke="#fff" strokeWidth="1.200" /></Svg></Slot>
      <div className="ml-[3px] flex gap-[1px]">
        <Slot bar="bg-[#76b9ed]"><Svg s={22} vb="-11 -11 22 22"><circle r="11" fill="#fcc934" /><path d="M-9.500-5.500A11 11 0 0 1 9.500-5.500L0-4z" fill="#ea4335" /><path d="M-9.500-5.500A11 11 0 0 0-1 11L4 3-4 2z" fill="#1ea446" /><path d="M9.500-5.500H0L4.500 3-1 11A11 11 0 0 0 9.500-5.500z" fill="#fcc934" /><circle r="5.200" fill="#fff" /><circle r="4.100" fill="#4285f4" /></Svg></Slot>
        <Slot bar="bg-[#76b9ed]"><Svg s={22} h={20}><path d="M0 2h9l2 2h11v14H0z" fill="#f8cf50" /><path d="M0 1h9l1 3H0z" fill="#e2a520" /><path d="M4 11h14v8h-4v-4H8v4H4z" fill="#3f9be0" /></Svg></Slot>
        <Slot><Svg s={24} h={24}><path d="M0 6h23v17H0z" fill="#f4f4f4" /><path d="M6.500 6V1h10v5" stroke="#f4f4f4" strokeWidth="1.600" /><path d="M7 10h4v4H7z" fill="#f25022" /><path d="M12.500 10h4v4h-4z" fill="#7fba00" /><path d="M7 15.500h4v4H7z" fill="#00a4ef" /><path d="M12.500 15.500h4v4h-4z" fill="#ffb900" /></Svg></Slot>
        <Slot><Svg s={24} h={22}><path d="M0 7l12-7 12 7v8H0z" fill="#0a5aa8" /><path d="M3 7h18l-9 8z" fill="#f3f6f8" /><path d="M0 7l24 15H0z" fill="#1b9de8" /><path d="M24 7v15L12 14.500z" fill="#38c3f7" /></Svg></Slot>
        <Slot><Svg s={18} h={22}><path d="M0 5l10-5v4L5 6v10l-5 1z" fill="#b3161c" /><path d="M9 0l9 2v18l-9 2z" fill="#e8490f" /><path d="M2 17h8v5z" fill="#e0283c" /><path d="M5 7l6-2v11H5z" fill="#26362c" /></Svg></Slot>
        <Slot bg="bg-[#55665f]" bar="bg-[#76b9ed]" full><FLogo s={24} /></Slot>
        <Slot bg="bg-[#a86a2e]" bar="bg-[#ff7800]" full>
          <div className="relative">
            <Svg s={20}><rect width="20" height="19" rx="3" fill="#7289da" /><path d="M4 6q6-3 12 0 2 4 1.500 8l-3.500 1-1-2H7l-1 2-3.500-1Q2 10 4 6z" fill="#fff" /><circle cx="7.500" cy="10" r="1.500" fill="#7289da" /><circle cx="12.500" cy="10" r="1.500" fill="#7289da" /></Svg>
            <div className="absolute -right-[4px] -bottom-[5px] flex h-[14px] w-[14px] items-center justify-center rounded-full bg-[#f04747] text-[10px] leading-none">1</div>
          </div>
        </Slot>
      </div>
      <div className="ml-auto flex items-center text-[12px]">
        <T w={45}>Vínculos</T>
        <Cell w={32}><Svg s={12} h={7}><path d="M.5 6.500L6 1l5.500 5.500" stroke="#fff" strokeWidth="1.400" /></Svg></Cell>
        <Cell w={16}><Svg s={16} h={14}><path d="M4.500 1.500h11v8h-10M.5.500h3v4h-3zM2 4.500v8.500h2M9.500 9.500v3M6 13h7" stroke="#fff" /></Svg></Cell>
        <Cell w={32}><Svg s={16} h={10}><path d="M3 10a3 3 0 0 1 0-6 5 5 0 0 1 9-1 3.500 3.500 0 0 1 1 7z" fill="#1490df" /><path d="M3 4a5 5 0 0 1 9-1L5 7z" fill="#0a64b8" /></Svg></Cell>
        <Cell w={16}><Svg s={16} h={14}><path d="M3 10a3 3 0 0 1 0-6 5 5 0 0 1 9-1l1 7z" fill="#d4d4d4" /><circle cx="11" cy="9" r="5" fill="#d92028" /><path d="M8.500 9h5" stroke="#fff" strokeWidth="1.500" /></Svg></Cell>
        <Cell w={32}><Svg s={17} h={14}><path d="M.5 5h2.500l4-4v12L3 9H.5zM9 4.500q2 2.500 0 5M11.500 2.500q3.500 4.500 0 9M14 1q4.500 6 0 12" stroke="#fff" strokeWidth="1.100" /></Svg></Cell>
        <span className="w-[4px]" /><T w={19}>ESP</T><span className="w-[15px]" />
        <div className="flex w-[58px] flex-col items-center leading-[18px]"><T w={27}>19:44</T><T w={58}>22-04-2021</T></div>
        <div className="relative ml-[16px] w-[38px]">
          <Svg s={16}><path d="M0 0h16v12H9l-4 4v-4H0z" fill="#fff" /><path d="M3 3.500h10M3 6h10M3 8.500h8" stroke="#2a3b38" /></Svg>
          <div className="absolute top-[6px] left-[8px] flex h-[16px] w-[16px] items-center justify-center rounded-full border border-[#999] bg-[#33413e] text-[11px] font-bold leading-none">2</div>
        </div>
        <div className="mr-[4px] h-[40px] w-[1px] bg-[#7d8a87]" />
      </div>
    </div>
  );
}

export default function App() {
  return (
    <div className="flex h-[1080px] w-[1920px] flex-col overflow-hidden">
      <TitleBar />
      <TabBar />
      <Ribbon />
      <main className="flex h-[853px] bg-[radial-gradient(ellipse_75%_110%_at_50%_85%,#7f8e94_0%,#87959b_55%,#93a1a6_100%)]">
        <div className="flex w-[605px] shrink-0 flex-col pt-[4px] pb-[4px]">
          <PanelHeader title="BROWSER" tw={52} open />
          <Tree />
          <div className="mt-auto"><PanelHeader title="COMMENTS" tw={58} /></div>
        </div>
        <div className="flex w-[660px] shrink-0 flex-col pt-[163px] pb-[4px]">
          <Model />
          <div className="mt-auto ml-[236px]"><NavBar /></div>
        </div>
        <div className="ml-auto pt-[13px]"><ViewCube /></div>
      </main>
      <Timeline />
      <Taskbar />
    </div>
  );
}
